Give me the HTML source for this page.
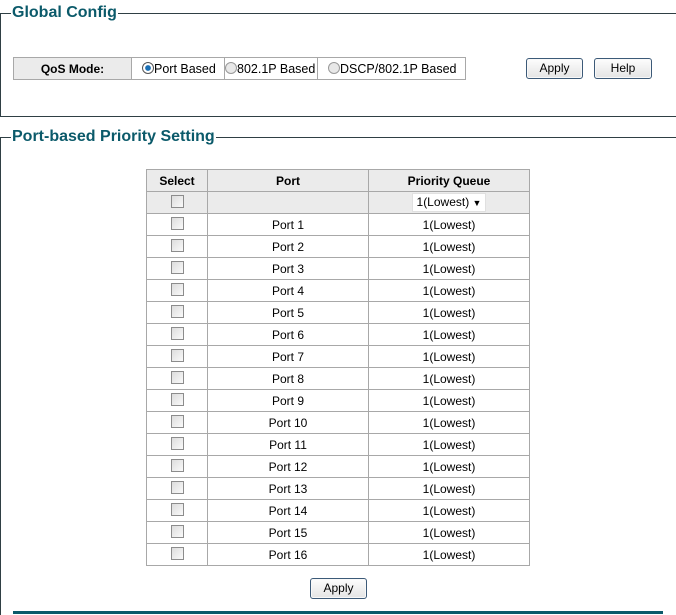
<!DOCTYPE html>
<html style="overflow:hidden"><head><style>
html,body{margin:0;width:676px;height:615px;overflow:hidden}
body{background:#fff;font-family:"Liberation Sans",Arial,sans-serif;font-size:12px;color:#000;position:relative}
.fs{position:absolute;border:1px solid #2f3f44;}
.lg{position:absolute;background:#fff;color:#0b5a6a;font-weight:bold;font-size:16px;padding:0 1px;line-height:18px}
table{border-collapse:collapse;position:absolute}
td{border:1px solid #a8a8a8;padding:0;text-align:center;height:21px;white-space:nowrap}
.g{background:#ebebeb}
.b{font-weight:bold}
.btn{position:absolute;border:1px solid #3c5a78;border-radius:3px;background:linear-gradient(#fdfdfd,#e4e4e4);text-align:center;font-size:12px;line-height:19px;height:19px;box-shadow:inset 0 0 0 1px #f8f8f8}
.cb{display:inline-block;width:11px;height:11px;border:1px solid #8c8c8c;background:linear-gradient(135deg,#dcdcdc,#fafafa);vertical-align:middle;margin-top:-4px}
.rd{display:inline-block;width:10px;height:10px;border:1px solid #999;border-radius:50%;background:#e8e8e8;vertical-align:-1px}
.rd.on{background:radial-gradient(circle,#1a6fb5 35%,#fff 45%);border-color:#555}
.q{table-layout:fixed}
.q td{font-size:12.5px}
</style></head><body>
<div class="fs" style="left:0;top:13px;width:680px;height:102px"></div>
<div class="lg" style="left:11px;top:4px">Global Config</div>
<table class="q" style="left:13px;top:57px;width:453px">
<tr><td class="g b" style="width:117px;font-size:12px">QoS Mode:</td>
<td style="width:82px;text-align:left;padding-left:10px"><span class="rd on"></span>Port Based</td>
<td style="width:92px;text-align:left"><span class="rd"></span>802.1P Based</td>
<td style="text-align:left;padding-left:10px"><span class="rd"></span>DSCP/802.1P Based</td></tr></table>
<div class="btn" style="left:526px;top:58px;width:55px">Apply</div>
<div class="btn" style="left:594px;top:58px;width:56px">Help</div>

<div class="fs" style="left:0;top:137px;width:680px;height:500px"></div>
<div class="lg" style="left:11px;top:128px">Port-based Priority Setting</div>
<table style="left:146px;top:169px;width:384px">
<tr class="g b"><td style="width:60px">Select</td><td style="width:160px">Port</td><td>Priority Queue</td></tr>
<tr class="g"><td><span class="cb"></span></td><td></td><td><span style="display:inline-block;background:#fff;border:1px solid #e0e0e0;padding:0 4px;line-height:16px">1(Lowest) <span style="font-size:9px">&#9660;</span></span></td></tr>
<tr><td><span class="cb"></span></td><td>Port 1</td><td>1(Lowest)</td></tr>
<tr><td><span class="cb"></span></td><td>Port 2</td><td>1(Lowest)</td></tr>
<tr><td><span class="cb"></span></td><td>Port 3</td><td>1(Lowest)</td></tr>
<tr><td><span class="cb"></span></td><td>Port 4</td><td>1(Lowest)</td></tr>
<tr><td><span class="cb"></span></td><td>Port 5</td><td>1(Lowest)</td></tr>
<tr><td><span class="cb"></span></td><td>Port 6</td><td>1(Lowest)</td></tr>
<tr><td><span class="cb"></span></td><td>Port 7</td><td>1(Lowest)</td></tr>
<tr><td><span class="cb"></span></td><td>Port 8</td><td>1(Lowest)</td></tr>
<tr><td><span class="cb"></span></td><td>Port 9</td><td>1(Lowest)</td></tr>
<tr><td><span class="cb"></span></td><td>Port 10</td><td>1(Lowest)</td></tr>
<tr><td><span class="cb"></span></td><td>Port 11</td><td>1(Lowest)</td></tr>
<tr><td><span class="cb"></span></td><td>Port 12</td><td>1(Lowest)</td></tr>
<tr><td><span class="cb"></span></td><td>Port 13</td><td>1(Lowest)</td></tr>
<tr><td><span class="cb"></span></td><td>Port 14</td><td>1(Lowest)</td></tr>
<tr><td><span class="cb"></span></td><td>Port 15</td><td>1(Lowest)</td></tr>
<tr><td><span class="cb"></span></td><td>Port 16</td><td>1(Lowest)</td></tr>
</table>
<div class="btn" style="left:310px;top:578px;width:55px">Apply</div>
<div style="position:absolute;left:13px;top:611px;width:650px;height:3px;background:#0b5a6a"></div>
</body></html>
